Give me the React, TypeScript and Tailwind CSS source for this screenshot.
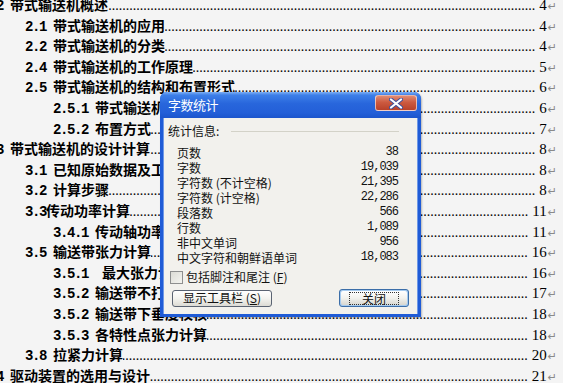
import React from 'react';

interface TocRow {
  level: 1 | 2 | 3;
  num: string;
  title: string;
  page: string;
}

const rows: TocRow[] = [
  { level: 1, num: '2 ', title: '带式输送机概述', page: '4' },
  { level: 2, num: '2.1 ', title: '带式输送机的应用', page: '4' },
  { level: 2, num: '2.2 ', title: '带式输送机的分类', page: '4' },
  { level: 2, num: '2.4 ', title: '带式输送机的工作原理', page: '5' },
  { level: 2, num: '2.5 ', title: '带式输送机的结构和布置形式', page: '6' },
  { level: 3, num: '2.5.1 ', title: '带式输送机的组成', page: '6' },
  { level: 3, num: '2.5.2 ', title: '布置方式', page: '7' },
  { level: 1, num: '3 ', title: '带式输送机的设计计算', page: '8' },
  { level: 2, num: '3.1 ', title: '已知原始数据及工作条件', page: '8' },
  { level: 2, num: '3.2 ', title: '计算步骤', page: '8' },
  { level: 2, num: '3.3', title: '传动功率计算', page: '11' },
  { level: 3, num: '3.4.1 ', title: '传动轴功率计算', page: '11' },
  { level: 2, num: '3.5 ', title: '输送带张力计算', page: '16' },
  { level: 3, num: '3.5.1  ', title: '最大张力计算', page: '16' },
  { level: 3, num: '3.5.2 ', title: '输送带不打滑条件校核', page: '17' },
  { level: 3, num: '3.5.2 ', title: '输送带下垂度校核', page: '18' },
  { level: 3, num: '3.5.3 ', title: '各特性点张力计算', page: '18' },
  { level: 2, num: '3.8 ', title: '拉紧力计算', page: '20' },
  { level: 1, num: '4 ', title: '驱动装置的选用与设计', page: '21' },
];

const stats: [string, string][] = [
  ['页数', '38'],
  ['字数', '19,039'],
  ['字符数 (不计空格)', '21,395'],
  ['字符数 (计空格)', '22,286'],
  ['段落数', '566'],
  ['行数', '1,089'],
  ['非中文单词', '956'],
  ['中文字符和朝鲜语单词', '18,083'],
];

const dots = '.'.repeat(160);

const indentClass = {
  1: 'ml-[-4px]',
  2: 'ml-[25px]',
  3: 'ml-[53px]',
};

function TocLine({ row }: { row: TocRow }) {
  return (
    <div className="flex items-baseline h-[20.6px] leading-[20.6px] pr-[6px] whitespace-nowrap">
      <span
        className={`${indentClass[row.level]} whitespace-pre font-bold text-[14px] tracking-[-1.4px] font-['Liberation_Mono',monospace]`}
      >
        {row.num}
      </span>
      <span className="font-bold text-[14px] font-['Noto_Sans_CJK_SC',sans-serif]">{row.title}</span>
      <span
        dir="rtl"
        className="flex-1 min-w-0 overflow-hidden text-[14px] font-['Liberation_Serif',serif] mr-[4px]"
      >
        {dots}
      </span>
      <span className="text-[15px] font-['Liberation_Serif',serif]">{row.page}</span>
      <span className="text-[11px] text-[#8a8a8a] font-['DejaVu_Sans',sans-serif] ml-[1px]">↵</span>
    </div>
  );
}

function WordCountDialog() {
  return (
    <div className="absolute left-[160px] top-[92px] w-[261px] h-[225px] flex flex-col rounded-t-[7px] bg-[#1f5bd6] shadow-[1px_1px_2px_rgba(0,0,0,0.25)]">
      {/* title bar */}
      <div className="h-[26px] flex items-center pl-[8px] pr-[4px] rounded-t-[7px] bg-[linear-gradient(180deg,#7fb0f5_0%,#3d7fe8_12%,#2866dc_45%,#235fd8_80%,#1c55cc_100%)]">
        <span className="text-white text-[13px] font-['Noto_Sans_CJK_SC',sans-serif] tracking-[-0.5px]">字数统计</span>
        <div className="ml-auto mt-[-4px] w-[42px] h-[16px] rounded-[3px] border border-[#ffffff99] bg-[linear-gradient(180deg,#e08a72_0%,#cc5a40_45%,#b8412a_100%)] flex items-center justify-center">
          <svg width="14" height="11" viewBox="0 0 14 11">
            <path d="M2 1.5 L12 9.5 M12 1.5 L2 9.5" stroke="#3b4f9e" strokeWidth="4" strokeLinecap="round" />
            <path d="M2 1.5 L12 9.5 M12 1.5 L2 9.5" stroke="#ffffff" strokeWidth="2.2" strokeLinecap="round" />
          </svg>
        </div>
      </div>

      {/* client area */}
      <div className="flex-1 mx-[3px] mb-[3px] bg-[#f2f1ed] border-l border-r border-[#6f98e6] flex flex-col font-['Noto_Sans_CJK_SC',sans-serif] text-[12px] text-[#111]">
        <div className="flex items-center h-[16px] mt-[5px] pl-[4px]">
          <span>统计信息:</span>
          <div className="flex-1 h-px bg-[#d3d2c8] ml-[12px] mr-[18px]" />
        </div>

        <div className="mt-[5.5px] pl-[13px] pr-[19px]">
          {stats.map(([label, value]) => (
            <div key={label} className="flex items-center justify-between h-[15px] leading-[15px]">
              <span>{label}</span>
              <span className="font-['Liberation_Mono',monospace] tracking-[-1px]">{value}</span>
            </div>
          ))}
        </div>

        <div className="flex items-center h-[14px] mt-[5.5px] pl-[6px] gap-[3px]">
          <div className="w-[13px] h-[13px] border border-[#8e8f8f] bg-[linear-gradient(135deg,#dcdcd6_0%,#f4f4f0_100%)]" />
          <span>
            包括脚注和尾注 (<span className="underline">F</span>)
          </span>
        </div>

        <div className="flex items-center justify-between mt-[5px] pl-[8px] pr-[8px]">
          <div className="w-[100px] h-[17px] rounded-[3px] border border-[#5a6372] bg-[linear-gradient(180deg,#ffffff_0%,#f3f3ef_50%,#dcdbd4_100%)] flex items-center justify-center">
            显示工具栏 (<span className="underline">S</span>)
          </div>
          <div className="w-[70px] h-[18px] rounded-[3px] border border-[#3c6ea8] p-[1px] bg-[#a6cbef]">
            <div className="w-full h-full rounded-[2px] bg-[linear-gradient(180deg,#ffffff_0%,#f2f2ee_50%,#d8d7d0_100%)] flex items-center justify-center">
              <span className="border border-dotted border-[#333] px-[12px] leading-[11px]">关闭</span>
            </div>
          </div>
        </div>
      </div>
    </div>
  );
}

export default function App() {
  return (
    <div className="relative w-[563px] h-[383px] overflow-hidden bg-[#f4f4f4] text-black">
      <div className="mt-[-6px]">
        {rows.map((row, i) => (
          <TocLine key={i} row={row} />
        ))}
      </div>
      <WordCountDialog />
    </div>
  );
}
